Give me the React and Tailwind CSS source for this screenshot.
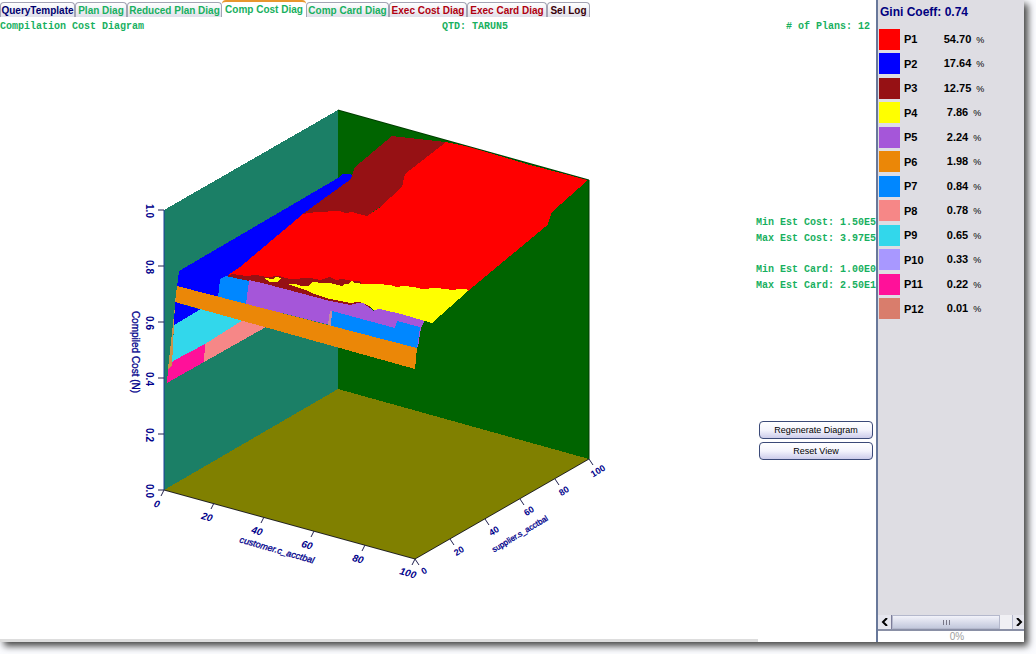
import React, { useState } from "react";

const TABS = [
    { id: "query", label: "QueryTemplate", width: "w-[75px]", color: "text-[#00006e]" },
    { id: "plan", label: "Plan Diag", width: "w-[52px]", color: "text-[#18b060]" },
    { id: "reduced", label: "Reduced Plan Diag", width: "w-[95px]", color: "text-[#18b060]" },
    { id: "compCost", label: "Comp Cost Diag", width: "w-[84px]", color: "text-[#18b060]" },
    { id: "compCard", label: "Comp Card Diag", width: "w-[83px]", color: "text-[#18b060]" },
    { id: "execCost", label: "Exec Cost Diag", width: "w-[78px]", color: "text-[#b00010]" },
    { id: "execCard", label: "Exec Card Diag", width: "w-[80px]", color: "text-[#b00010]" },
    { id: "selLog", label: "Sel Log", width: "w-[43px]", color: "text-[#3a0008]" },
];

const PLANS = [
    { name: "P1", percent: "54.70", color: "bg-[#ff0000]" },
    { name: "P2", percent: "17.64", color: "bg-[#0000ff]" },
    { name: "P3", percent: "12.75", color: "bg-[#961114]" },
    { name: "P4", percent: "7.86", color: "bg-[#ffff00]" },
    { name: "P5", percent: "2.24", color: "bg-[#a556d9]" },
    { name: "P6", percent: "1.98", color: "bg-[#eb8707]" },
    { name: "P7", percent: "0.84", color: "bg-[#0087ff]" },
    { name: "P8", percent: "0.78", color: "bg-[#f68787]" },
    { name: "P9", percent: "0.65", color: "bg-[#32d7eb]" },
    { name: "P10", percent: "0.33", color: "bg-[#a898ff]" },
    { name: "P11", percent: "0.22", color: "bg-[#ff1199]" },
    { name: "P12", percent: "0.01", color: "bg-[#d97d6c]" },
];

// walls, floor and plan regions, back to front
const SURFACES = [
    { fill: "#1b7f66", points: "164,210 338,110 338,390 164,490" },
    { fill: "#006400", points: "338,110 589,180 589,459 338,390" },
    { fill: "#808000", points: "164,490 338,389 589,459 415,559" },
    { fill: "#0000ff", points: "179,271 338,178 343,174 350,174 354,178 303,216 233,277 219,298 177,287" },
    { fill: "#961114", points: "392,136 400,137 446,142 410,180 404,190 367,216 300,216 351,179 355,167" },
    {
        fill: "#ff0000",
        points:
            "446,142 470,147 500,156 530,165 588,180 552,212 548,224 545,227 468,291 455,298 350,290 228,275 240,267 303,214 316,212 340,211 345,213 352,212 363,215 367,216 379,208 402,187 405,174",
    },
    {
        fill: "#961114",
        points:
            "228,275 233,274 246,276 256,275 267,277 279,276 290,279 310,278 320,280 330,277 336,280 342,279 352,281 360,281 362,285 372,312 350,306 340,305 318,300 300,295 280,288 262,284 249,282 228,277",
    },
    {
        fill: "#a556d9",
        points: "249,280 266,284 300,293 330,301 350,305 358,303 363,303 370,308 373,311 380,308 425,320 421,328 418,347 246,304",
    },
    {
        fill: "#ffff00",
        points:
            "287,284 296,284 301,286 308,286 312,282 316,282 319,283 330,283 342,286 345,284 348,284 352,281 355,283 364,284 377,284 390,285 396,287 404,286 414,287 422,289 436,288 446,289 452,290 459,289 466,289 468,291 432,323 425,321 401,314 380,309 373,310 371,307 363,303 358,302 350,303 330,299 314,294 308,291 300,288",
    },
    { fill: "#ffff00", points: "264,278 273,279 276,277 281,278 278,282 270,282" },
    { fill: "#0087ff", points: "220,279 226,276 249,281 246,304 218,298" },
    { fill: "#0087ff", points: "332,311 395,328 397,321 420,327 417,349 330,326" },
    { fill: "#c58aa0", points: "330,311 332,311 331,326 328,325" },
    { fill: "#0000ff", points: "175,302 202,310 174,326" },
    { fill: "#32d7eb", points: "201,309 244,320 205,345 172,364 174,325" },
    { fill: "#f68787", points: "243,320 266,327 204,362 205,344" },
    { fill: "#ff1199", points: "205,344 204,362 167,383 168,369 173,361" },
    { fill: "#eb8707", points: "177,286 417,348 415,369 175,302" },
    { fill: "#c99449", points: "177,287 175,302 172,366 168,369" },
];

const COST_TICKS = [
    { label: "1.0", y: 210 },
    { label: "0.8", y: 266 },
    { label: "0.6", y: 322 },
    { label: "0.4", y: 378 },
    { label: "0.2", y: 434 },
    { label: "0.0", y: 490 },
];

const CUSTOMER_TICKS = [
    { label: "0", x: 164, y: 490 },
    { label: "20", x: 214, y: 503 },
    { label: "40", x: 264, y: 517 },
    { label: "60", x: 314, y: 531 },
    { label: "80", x: 365, y: 545 },
    { label: "100", x: 415, y: 559 },
];

const SUPPLIER_TICKS = [
    { label: "0", x: 415, y: 559 },
    { label: "20", x: 450, y: 539 },
    { label: "40", x: 485, y: 519 },
    { label: "60", x: 520, y: 499 },
    { label: "80", x: 555, y: 479 },
    { label: "100", x: 589, y: 459 },
];

function AxisText({ x, y, angle, className, children }) {
    return (
        <text
            transform={`translate(${x} ${y}) rotate(${angle})`}
            textAnchor="middle"
            dominantBaseline="central"
            className={className}
        >
            {children}
        </text>
    );
}

function CostDiagram() {
    return (
        <svg viewBox="120 100 500 490" className="w-[500px] max-w-none" role="img" aria-label="Compilation cost surface">
            <g shapeRendering="crispEdges">
                {SURFACES.map((s, i) => (
                    <polygon key={i} points={s.points} fill={s.fill} />
                ))}
            </g>

            {/* axes */}
            <path d="M338 110 589 180V459" fill="none" stroke="#003c00" />
            <path d="M164 490 415 559 589 459" fill="none" stroke="#222222" />
            <path d="M164 210V490" fill="none" stroke="#1c3c9c" />

            <g stroke="#222250">
                {COST_TICKS.map((t) => (
                    <line key={t.label} x1="158" y1={t.y} x2="164" y2={t.y} />
                ))}
                {CUSTOMER_TICKS.map((t) => (
                    <line key={t.label} x1={t.x} y1={t.y} x2={t.x - 3} y2={t.y + 6} />
                ))}
                {SUPPLIER_TICKS.map((t) => (
                    <line key={t.label} x1={t.x} y1={t.y} x2={t.x + 4} y2={t.y + 6} />
                ))}
            </g>

            <g className="fill-[#00008b]">
                {COST_TICKS.map((t) => (
                    <AxisText key={t.label} x={149} y={t.y + 1} angle={90} className="text-[10px] font-bold">
                        {t.label}
                    </AxisText>
                ))}
                {CUSTOMER_TICKS.map((t) => (
                    <AxisText key={t.label} x={t.x - 7} y={t.y + 14} angle={16} className="text-[10px] font-bold italic">
                        {t.label}
                    </AxisText>
                ))}
                {SUPPLIER_TICKS.map((t) => (
                    <AxisText key={t.label} x={t.x + 9} y={t.y + 12} angle={-31} className="text-[9px] font-bold">
                        {t.label}
                    </AxisText>
                ))}
                <g stroke="#00008b" strokeWidth="0.3">
                    <AxisText x={135} y={352} angle={90} className="text-[10px]">
                        Compiled Cost (N)
                    </AxisText>
                    <AxisText x={277} y={550} angle={16} className="text-[9px] italic">
                        customer.c_acctbal
                    </AxisText>
                    <AxisText x={520} y={534} angle={-31} className="text-[8px]">
                        supplier.s_acctbal
                    </AxisText>
                </g>
            </g>
        </svg>
    );
}

function TabBar({ active, onSelect }) {
    return (
        <div role="tablist" className="flex h-[17px] items-end">
            {TABS.map((tab) => {
                const selected = tab.id === active;
                return (
                    <button
                        key={tab.id}
                        type="button"
                        role="tab"
                        aria-selected={selected}
                        onClick={() => onSelect(tab.id)}
                        className={`${tab.width} ${tab.color} shrink-0 whitespace-nowrap rounded-t-sm text-center text-[10px] font-bold ${
                            selected
                                ? "h-[17px] border-t-2 border-[#e8962e] bg-white leading-[14px]"
                                : "h-[15px] border border-b-0 border-[#a4a4b4] bg-linear-to-b from-white to-[#e0e0ea] leading-[15px]"
                        }`}
                    >
                        {tab.label}
                    </button>
                );
            })}
        </div>
    );
}

function ActionButton({ children }) {
    return (
        <button
            type="button"
            className="h-[18px] w-full rounded-sm border border-[#3b4a78] bg-linear-to-b from-white via-[#f4f4fc] to-[#ccccea] text-[9px] leading-4 text-black"
        >
            {children}
        </button>
    );
}

function ScrollBar() {
    return (
        <div className="flex h-[14px] bg-[#f0f0f4]">
            <button type="button" aria-label="Scroll left" className="flex w-[14px] items-center justify-center border-r border-[#7d7d99] bg-[#e6e6ee]">
                <svg viewBox="0 0 8 8" className="size-2">
                    <path d="M6 0 2 4 6 8" fill="none" stroke="#000" strokeWidth="2" />
                </svg>
            </button>
            <div className="flex w-[108px] items-center justify-center gap-px border border-[#b4b8cc] bg-linear-to-b from-[#f2f2fa] to-[#c2c8dc]">
                <span className="h-[5px] w-px bg-[#777788]" />
                <span className="ml-px h-[5px] w-px bg-[#777788]" />
                <span className="ml-px h-[5px] w-px bg-[#777788]" />
            </div>
            <button type="button" aria-label="Scroll right" className="ml-auto flex w-3 items-center justify-center border-l border-[#b4b8cc] bg-[#e6e6ee]">
                <svg viewBox="0 0 8 8" className="size-2">
                    <path d="M2 0 6 4 2 8" fill="none" stroke="#000" strokeWidth="2" />
                </svg>
            </button>
        </div>
    );
}

function Legend() {
    return (
        <aside className="flex w-[148px] shrink-0 flex-col border-l-2 border-[#68789a] bg-[#dedde3]">
            <h2 className="h-[27px] px-[2px] text-[12px] font-bold leading-[25px] text-[#000080]">Gini Coeff: 0.74</h2>
            <table className="h-[294px] w-[110px] table-fixed border-collapse text-[11px] font-bold leading-[18px] text-black">
                <tbody>
                    {PLANS.map((plan) => (
                        <tr key={plan.name}>
                            <td className="w-[26px] p-0 pl-px align-middle">
                                <div className={`${plan.color} h-[21px] w-[21px]`} />
                            </td>
                            <td className="w-[36px] p-0">{plan.name}</td>
                            <td className="whitespace-nowrap p-0 text-center">
                                {plan.percent}
                                <span className="ml-[5px] text-[9px] font-normal">%</span>
                            </td>
                        </tr>
                    ))}
                </tbody>
            </table>
            <div className="mt-auto">
                <ScrollBar />
                <div className="h-[2px] bg-[#8a90a6]" />
                <div className="h-[11px] bg-white pl-3 text-center text-[10px] leading-[11px] text-[#a0a0a0]">0%</div>
            </div>
        </aside>
    );
}

export default function App() {
    const [activeTab, setActiveTab] = useState("compCost");

    return (
        <div className="flex min-h-screen bg-[#fbfcff] pb-3 pr-3 font-['Liberation_Sans',Arial,sans-serif]">
            <div className="flex min-w-0 grow bg-white shadow-[4px_4px_7px_#444444]">
                <main className="flex min-w-0 grow flex-col">
                    <TabBar active={activeTab} onSelect={setActiveTab} />

                    <div className="grid h-[19px] grid-cols-[1fr_auto_1fr] pr-[6px] font-['Liberation_Mono','Courier_New',monospace] text-[10px] font-bold leading-[19px] text-[#18b060]">
                        <h1>Compilation Cost Diagram</h1>
                        <span className="pl-20">QTD: TARUN5</span>
                        <span className="text-right"># of Plans: 12</span>
                    </div>

                    <div className="flex grow">
                        <div className="min-w-0 grow pl-[120px] pt-[64px]">
                            <CostDiagram />
                        </div>
                        <div className="flex w-[120px] shrink-0 flex-col pt-[179px]">
                            <div className="whitespace-nowrap font-['Liberation_Mono','Courier_New',monospace] text-[10px] font-bold leading-4 text-[#18b060]">
                                <p>Min Est Cost: 1.50E5</p>
                                <p>Max Est Cost: 3.97E5</p>
                                <p className="mt-[15px]">Min Est Card: 1.00E0</p>
                                <p>Max Est Card: 2.50E1</p>
                            </div>
                            <div className="mt-[127px] flex flex-col gap-[3px] px-[3px]">
                                <ActionButton>Regenerate Diagram</ActionButton>
                                <ActionButton>Reset View</ActionButton>
                            </div>
                        </div>
                    </div>

                    <div className="mr-[118px] h-[3px] bg-[#dddddd]" />
                </main>
                <Legend />
            </div>
        </div>
    );
}
